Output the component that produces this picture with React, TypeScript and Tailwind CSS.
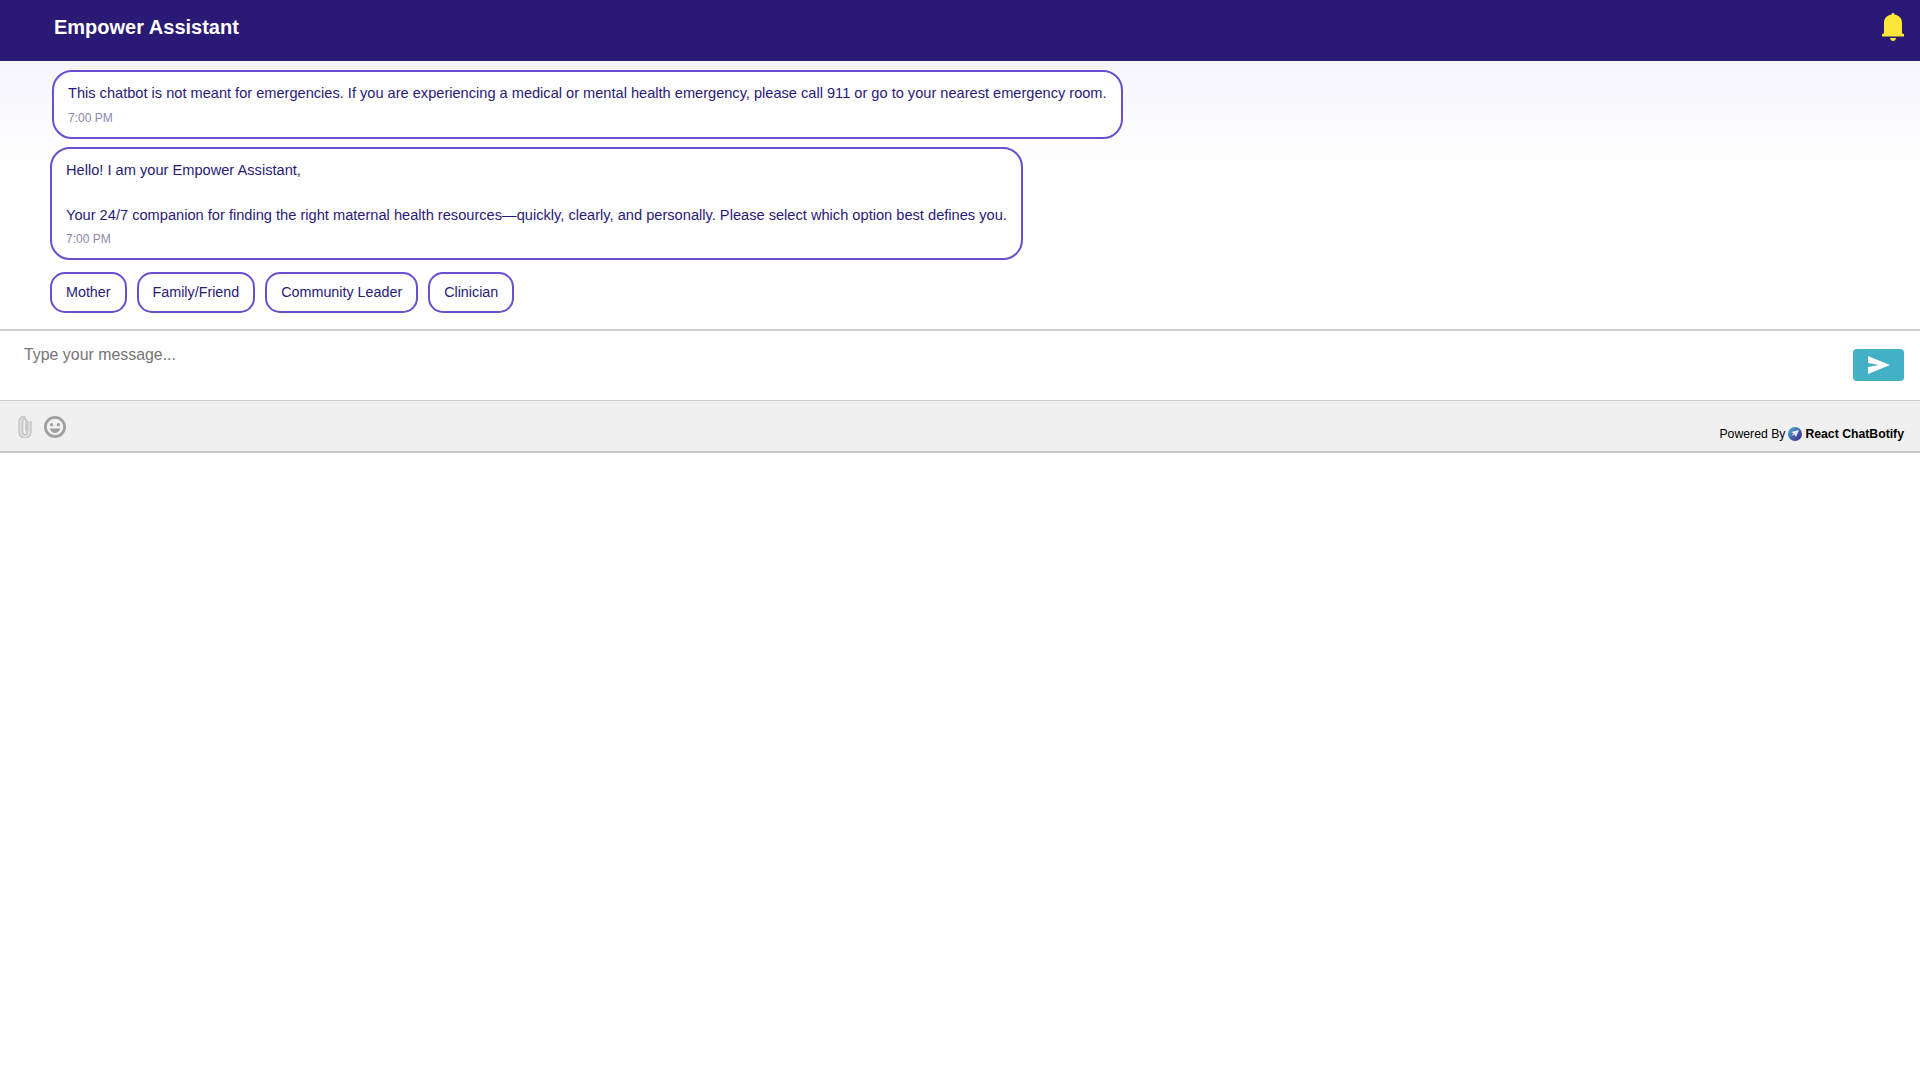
const options = ['Mother', 'Family/Friend', 'Community Leader', 'Clinician'];

function BellIcon() {
  return (
    <svg viewBox="0 0 22 28" className="h-[28px] w-[22px]" fill="#fde83a">
      <path d="M11 0c.9 0 1.400.6 1.500 1.600C16.800 2.400 20 5 20 10v9.500c0 .8.6 1.500 2 1.500v2.500H0V21c1.400 0 2-.7 2-1.500V10c0-5 3.200-7.600 7.500-8.400C9.600.6 10.100 0 11 0z" />
      <path d="M8 25h6c-.3 1.800-1.400 3-3 3s-2.700-1.200-3-3z" />
    </svg>
  );
}

function SendIcon() {
  return (
    <svg viewBox="0 0 22 18" className="h-[18px] w-[22px]" fill="#ffffff">
      <path d="M0 0l22 9L0 18v-7l11-2L0 7z" />
    </svg>
  );
}

function ClipIcon() {
  return (
    <svg viewBox="0 0 16 24" className="h-[22px] w-[14px]" fill="none" stroke="#c9c9c9" strokeWidth="2.400" strokeLinecap="round">
      <path d="M11 6v12a3 3 0 0 1-6 0V5a2.200 2.200 0 0 1 4.400 0v11" />
      <path d="M14.500 6v12a6.500 6.500 0 0 1-13 0V5a5 5 0 0 1 6-4.500" />
    </svg>
  );
}

function EmojiIcon() {
  return (
    <svg viewBox="0 0 24 24" className="h-[22px] w-[22px]" fill="none">
      <circle cx="12" cy="12" r="10.500" stroke="#a0a0a0" strokeWidth="3" />
      <circle cx="8.300" cy="9.500" r="1.800" fill="#a0a0a0" />
      <circle cx="15.700" cy="9.500" r="1.800" fill="#a0a0a0" />
      <path d="M6.500 13.500h11c-.5 3-2.800 5-5.500 5s-5-2-5.500-5z" fill="#a0a0a0" />
    </svg>
  );
}

function BotifyLogo() {
  return (
    <svg viewBox="0 0 14 14" className="h-[14px] w-[14px]">
      <defs>
        <linearGradient id="botify" x1="0" y1="0" x2="1" y2="1">
          <stop offset="0" stopColor="#42b0c5" />
          <stop offset="1" stopColor="#491d8d" />
        </linearGradient>
      </defs>
      <circle cx="7" cy="7" r="7" fill="url(#botify)" />
      <path d="M3 5l8-2-3 7-1.500-2.500L3 9l2.500-2.500z" fill="#ffffff" opacity="0.85" />
    </svg>
  );
}

export default function App() {
  return (
    <div className="min-h-screen bg-white font-['Liberation_Sans',Arial,sans-serif]">
      <header className="flex h-[61px] items-start justify-between bg-[#2a1a75] pl-[54px] pr-[16px]">
        <h1 className="pt-[16px] text-[20px] font-bold leading-[23px] text-white">Empower Assistant</h1>
        <div className="pt-[13px]">
          <BellIcon />
        </div>
      </header>

      <div className="flex h-[268px] flex-col items-start bg-gradient-to-b from-[#f7f5fc] to-white to-[40%] pl-[50px]">
        <div className="ml-[2px] mt-[9px] rounded-[20px] border-2 border-[#6a4fd0] bg-white px-[14px] pb-[12px] pt-[11px]">
          <p className="text-[14.600px] leading-[20px] text-[#2a1a75]">
            This chatbot is not meant for emergencies. If you are experiencing a medical or mental health emergency, please call 911 or go to your nearest emergency room.
          </p>
          <p className="mt-[8px] text-[12px] leading-[14px] text-[#8c87b0]">7:00 PM</p>
        </div>

        <div className="mt-[8px] rounded-[20px] border-2 border-[#6a4fd0] bg-white px-[14px] pb-[12px] pt-[10px]">
          <p className="text-[14.640px] leading-[22.500px] text-[#2a1a75]">Hello! I am your Empower Assistant,</p>
          <p className="h-[22.500px]" />
          <p className="text-[14.640px] leading-[22.500px] text-[#2a1a75]">
            Your 24/7 companion for finding the right maternal health resources—quickly, clearly, and personally. Please select which option best defines you.
          </p>
          <p className="mt-[5px] text-[12px] leading-[14px] text-[#8c87b0]">7:00 PM</p>
        </div>

        <div className="mt-[12px] flex gap-[10px]">
          {options.map((option) => (
            <button
              key={option}
              className="h-[41px] rounded-[15px] border-2 border-[#6a4fd0] bg-white px-[14px] pt-[2px] text-[14.320px] text-[#2a1a75]"
            >
              {option}
            </button>
          ))}
        </div>
      </div>

      <div className="flex h-[72px] items-center justify-between border-b border-t-2 border-[#d0d0d0] bg-white pb-[1px] pl-[24px] pr-[16px]">
        <span className="-mt-[20px] text-[15.900px] leading-[18px] text-[#757575]">Type your message...</span>
        <button className="flex h-[32px] w-[51px] items-center justify-center rounded-[4px] bg-[#42b0c5]">
          <SendIcon />
        </button>
      </div>

      <div className="flex h-[52px] items-start justify-between border-b-2 border-[#c8c8c8] bg-[#f0f0f0] pl-[18px] pr-[16px]">
        <div className="flex items-center gap-[12px] pt-[15px]">
          <ClipIcon />
          <EmojiIcon />
        </div>
        <div className="flex items-center gap-[3px] pt-[26px] text-[12.240px] leading-[14px] text-black">
          <span>Powered By</span>
          <BotifyLogo />
          <span className="font-bold">React ChatBotify</span>
        </div>
      </div>
    </div>
  );
}
